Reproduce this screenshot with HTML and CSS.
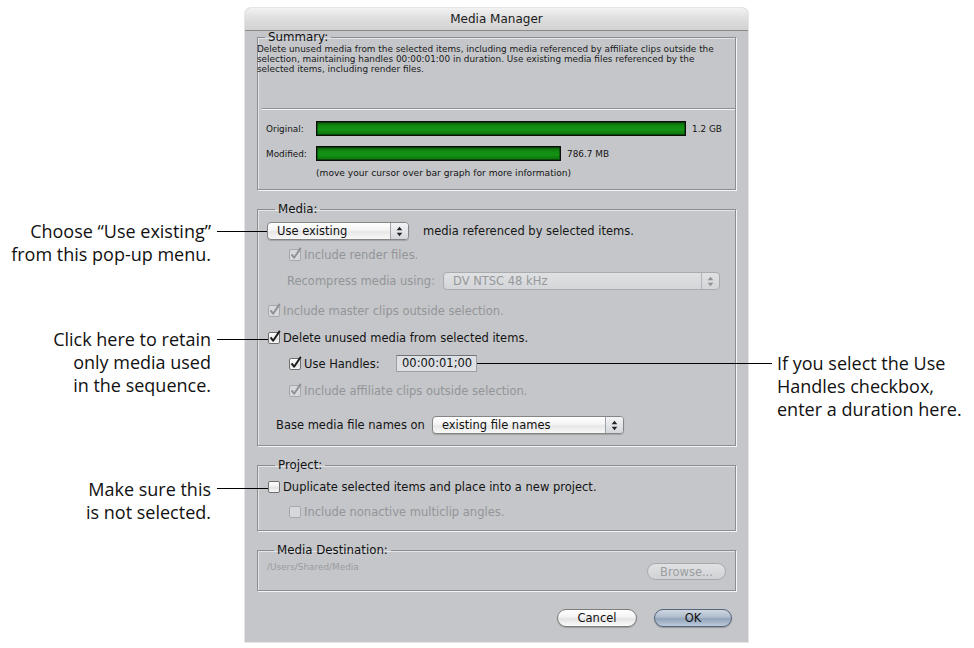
FILE: index.html
```html
<!DOCTYPE html>
<html lang="en">
<head>
<meta charset="utf-8">
<title>Media Manager</title>
<link rel="stylesheet" href="styles.css">
</head>
<body>
<svg class="defs" width="0" height="0" aria-hidden="true">
  <defs>
    <linearGradient id="cbg" x1="0" y1="0" x2="0" y2="1">
      <stop offset="0" stop-color="#ffffff"/>
      <stop offset="0.5" stop-color="#eeeeee"/>
      <stop offset="0.55" stop-color="#e2e2e2"/>
      <stop offset="1" stop-color="#fbfbfb"/>
    </linearGradient>
  </defs>
</svg>
<div class="figure">
  <div class="dialog">
    <div class="titlebar">Media Manager</div>
    <div class="dialog-body">

      <fieldset class="group group-summary">
        <legend>Summary:</legend>
        <p class="summary-text">Delete unused media from the selected items, including media referenced by affiliate clips outside the<br>selection, maintaining handles 00:00:01:00 in duration. Use existing media files referenced by the<br>selected items, including render files.</p>
        <div class="separator"></div>
        <div class="bar-row bar-row-first">
          <span class="bar-label">Original:</span>
          <span class="bar" style="width:370px"></span>
          <span class="bar-value">1.2 GB</span>
        </div>
        <div class="bar-row">
          <span class="bar-label">Modified:</span>
          <span class="bar" style="width:245px"></span>
          <span class="bar-value">786.7 MB</span>
        </div>
        <p class="bar-hint">(move your cursor over bar graph for more information)</p>
      </fieldset>

      <fieldset class="group group-media">
        <legend>Media:</legend>
        <div class="row row-popup">
          <div class="popup popup-use">
            <span class="popup-text">Use existing</span>
            <span class="popup-arrows"><svg width="7" height="11" viewBox="0 0 7 11"><path d="M3.5 0.8 L6.3 4.2 L0.7 4.2 Z M3.5 10.2 L6.3 6.8 L0.7 6.8 Z"/></svg></span>
          </div>
          <span class="after-popup">media referenced by selected items.</span>
        </div>
        <div class="row check-row indent is-disabled r-render">
          <svg class="cb" width="13" height="14" viewBox="0 0 13 14"><rect class="cb-box" x="0.5" y="2.5" width="11" height="11" rx="1.5"/><path class="cb-mark" d="M2.6 7.4 L5.1 10.8 L11.8 0.9"/></svg>
          <span>Include render files.</span>
        </div>
        <div class="row row-recompress is-disabled">
          <span class="recompress-label">Recompress media using:</span>
          <div class="popup popup-recompress is-disabled">
            <span class="popup-text">DV NTSC 48 kHz</span>
            <span class="popup-arrows"><svg width="7" height="11" viewBox="0 0 7 11"><path d="M3.5 0.8 L6.3 4.2 L0.7 4.2 Z M3.5 10.2 L6.3 6.8 L0.7 6.8 Z"/></svg></span>
          </div>
        </div>
        <div class="row check-row is-disabled r-master">
          <svg class="cb" width="13" height="14" viewBox="0 0 13 14"><rect class="cb-box" x="0.5" y="2.5" width="11" height="11" rx="1.5"/><path class="cb-mark" d="M2.6 7.4 L5.1 10.8 L11.8 0.9"/></svg>
          <span>Include master clips outside selection.</span>
        </div>
        <div class="row check-row r-delete">
          <svg class="cb" width="13" height="14" viewBox="0 0 13 14"><rect class="cb-box" x="0.5" y="2.5" width="11" height="11" rx="1.5"/><path class="cb-mark" d="M2.6 7.4 L5.1 10.8 L11.8 0.9"/></svg>
          <span>Delete unused media from selected items.</span>
        </div>
        <div class="row check-row indent r-handles">
          <svg class="cb" width="13" height="14" viewBox="0 0 13 14"><rect class="cb-box" x="0.5" y="2.5" width="11" height="11" rx="1.5"/><path class="cb-mark" d="M2.6 7.4 L5.1 10.8 L11.8 0.9"/></svg>
          <span class="handles-label">Use Handles:</span>
          <span class="field">00:00:01;00</span>
        </div>
        <div class="row check-row indent is-disabled r-affiliate">
          <svg class="cb" width="13" height="14" viewBox="0 0 13 14"><rect class="cb-box" x="0.5" y="2.5" width="11" height="11" rx="1.5"/><path class="cb-mark" d="M2.6 7.4 L5.1 10.8 L11.8 0.9"/></svg>
          <span>Include affiliate clips outside selection.</span>
        </div>
        <div class="row row-base">
          <span class="base-label">Base media file names on</span>
          <div class="popup popup-base">
            <span class="popup-text">existing file names</span>
            <span class="popup-arrows"><svg width="7" height="11" viewBox="0 0 7 11"><path d="M3.5 0.8 L6.3 4.2 L0.7 4.2 Z M3.5 10.2 L6.3 6.8 L0.7 6.8 Z"/></svg></span>
          </div>
        </div>
      </fieldset>

      <fieldset class="group group-project">
        <legend>Project:</legend>
        <div class="row check-row r-duplicate">
          <svg class="cb" width="13" height="14" viewBox="0 0 13 14"><rect class="cb-box" x="0.5" y="2.5" width="11" height="11" rx="1.5"/></svg>
          <span>Duplicate selected items and place into a new project.</span>
        </div>
        <div class="row check-row indent is-disabled r-nonactive">
          <svg class="cb" width="13" height="14" viewBox="0 0 13 14"><rect class="cb-box" x="0.5" y="2.5" width="11" height="11" rx="1.5"/></svg>
          <span>Include nonactive multiclip angles.</span>
        </div>
      </fieldset>

      <fieldset class="group group-dest">
        <legend>Media Destination:</legend>
        <div class="dest-row">
          <span class="dest-path">/Users/Shared/Media</span>
          <span class="btn btn-browse">Browse...</span>
        </div>
      </fieldset>

      <div class="button-row">
        <span class="btn btn-cancel">Cancel</span>
        <span class="btn btn-ok">OK</span>
      </div>
    </div>
  </div>

  <div class="callout callout-left c-choose">Choose “Use existing”<br>from this pop-up menu.</div>
  <div class="callout callout-left c-click">Click here to retain<br>only media used<br>in the sequence.</div>
  <div class="callout callout-left c-make">Make sure this<br>is not selected.</div>
  <div class="callout callout-right c-handles">If you select the Use<br>Handles checkbox,<br>enter a duration here.</div>

  <span class="leader l-choose"></span>
  <span class="leader l-click"></span>
  <span class="leader l-make"></span>
  <span class="leader l-handles"></span>
</div>
</body>
</html>
```

FILE: styles.css
```css
* { box-sizing: border-box; }
html, body { margin: 0; padding: 0; background: #ffffff; }
body { font-family: "DejaVu Sans", Verdana, sans-serif; color: #141414; }

.defs { position: absolute; width: 0; height: 0; }

.figure {
  position: relative;
  width: 974px;
  height: 648px;
  padding: 8px 0 0 245px;
  overflow: hidden;
}

/* ---------- dialog ---------- */
.dialog {
  width: 503px;
  height: 634px;
  background: #c4c6c9;
  border-radius: 6px 6px 0 0;
  box-shadow: 0 0 0 1px rgba(0, 0, 0, 0.10);
}

.titlebar {
  height: 23px;
  border-bottom: 1px solid #8a8a8a;
  border-radius: 6px 6px 0 0;
  background: linear-gradient(#f2f2f2, #dedede 50%, #d2d2d2);
  text-align: center;
  font-size: 12px;
  line-height: 22px;
  color: #1a1a1a;
}

.dialog-body { padding: 0 12px; }

/* ---------- group boxes ---------- */
.group {
  margin: 0;
  padding: 0;
  min-width: 0;
  border: 1px solid #8b8d90;
  box-shadow: 1px 1px 0 rgba(255, 255, 255, 0.8), inset 1px 1px 0 rgba(255, 255, 255, 0.55);
}
.group legend {
  margin-left: 7px;
  padding: 0 3px;
  height: 12px;
  font-size: 11.8px;
  line-height: 12px;
  color: #111;
}
.group-media { margin-top: 13px; padding: 0 0 11px 10px; }
.group-project { margin-top: 13px; padding: 0 0 11px 10px; }
.group-dest { margin-top: 13px; padding: 0 9px 10px 9px; }

/* ---------- summary ---------- */
.summary-text {
  margin: 1px 0 0 -1px;
  font-size: 8.9px;
  line-height: 10px;
  white-space: nowrap;
  color: #1a1a1a;
}
.separator {
  margin: 34px 0 0 4px;
  height: 2px;
  border-top: 1px solid #8f9194;
  border-bottom: 1px solid rgba(255, 255, 255, 0.8);
}
.bar-row {
  display: flex;
  align-items: center;
  height: 15px;
  margin-top: 10px;
  padding-left: 8px;
  font-size: 8.9px;
}
.bar-row-first { margin-top: 11px; }
.bar-label { width: 50px; }
.bar {
  height: 15px;
  border: 1px solid #0b0d0b;
  background: linear-gradient(#0a5a0a, #128a12 30%, #149414 60%, #0d6e0d);
  box-shadow: inset 0 0 0 1px rgba(0, 0, 0, 0.35);
}
.bar-value { margin-left: 6px; }
.bar-hint {
  margin: 6px 0 0 58px;
  font-size: 9.1px;
  line-height: 12px;
  padding-bottom: 10px;
  white-space: nowrap;
}

/* ---------- media rows ---------- */
.row {
  display: flex;
  align-items: center;
  font-size: 11.5px;
  white-space: nowrap;
}
.check-row { height: 14px; }
.indent { padding-left: 21px; }
.is-disabled { color: #939598; }

.row-popup { margin-top: 7px; height: 18px; }
.r-render { margin-top: 8px; }
.row-recompress { margin-top: 10px; height: 18px; padding-left: 19px; }
.recompress-label { width: 156px; }
.r-master { margin-top: 14px; }
.r-delete { margin-top: 13px; }
.r-handles { margin-top: 10px; height: 17px; }
.r-affiliate { margin-top: 12px; }
.row-base { margin-top: 18px; height: 18px; padding-left: 8px; }
.r-duplicate { margin-top: 9px; }
.r-nonactive { margin-top: 11px; }

.cb { flex: none; margin-right: 2px; margin-top: -2px; overflow: visible; }
.cb-box { fill: url(#cbg); stroke: #6e6e6e; stroke-width: 1; }
.cb-mark { fill: none; stroke: #1a1a1a; stroke-width: 1.9; stroke-linejoin: round; }
.is-disabled .cb-box { fill: #d6d8db; stroke: #a6a8ab; }
.is-disabled .cb-mark { stroke: #8e9093; }

.after-popup { margin-left: 14px; color: #161616; }

/* popup buttons */
.popup {
  display: flex;
  height: 18px;
  border: 1px solid #858585;
  border-radius: 4px;
  background: linear-gradient(#ffffff, #f4f4f4 45%, #e7e7e7 55%, #f8f8f8);
  box-shadow: 0 1px 1px rgba(0, 0, 0, 0.18);
  overflow: hidden;
  color: #111;
}
.popup-text { flex: 1; padding-left: 9px; line-height: 16px; }
.popup-arrows {
  flex: none;
  width: 18px;
  border-left: 1px solid #a0a2a6;
  display: flex;
  align-items: center;
  justify-content: center;
  background: linear-gradient(#f3f4f6, #d3d7dc);
}
.popup-arrows svg { fill: #222; }
.popup-use { width: 142px; margin-left: -1px; }
.popup-recompress { width: 277px; }
.popup-base { width: 192px; margin-left: 7px; }
.popup.is-disabled {
  border-color: #a9abae;
  background: linear-gradient(#dfe1e3, #d3d5d8);
  box-shadow: none;
  color: #96989b;
}
.popup.is-disabled .popup-arrows { background: transparent; border-left-color: #b3b5b8; }
.popup.is-disabled .popup-arrows svg { fill: #8f9194; }

.handles-label { width: 92px; }
.field {
  width: 81px;
  height: 17px;
  border: 1px solid #9c9ea1;
  border-top-color: #707275;
  background: #dde0e4;
  padding-left: 5px;
  line-height: 15px;
  color: #111;
}

/* ---------- destination ---------- */
.dest-row {
  display: flex;
  justify-content: space-between;
  align-items: flex-start;
  margin-top: 6px;
  height: 18px;
}
.dest-path { font-size: 8.9px; line-height: 10px; color: #9a9c9f; }

/* ---------- buttons ---------- */
.btn {
  display: inline-flex;
  align-items: center;
  justify-content: center;
  height: 18px;
  border-radius: 9px;
  font-size: 11.5px;
}
.btn-browse {
  width: 79px;
  height: 17px;
  margin-top: 1px;
  border: 1px solid #a7a9ac;
  background: linear-gradient(#dfe1e3, #d0d2d5);
  color: #9b9da0;
}
.button-row {
  display: flex;
  justify-content: flex-end;
  gap: 17px;
  margin-top: 18px;
  padding-right: 4px;
}
.btn-cancel {
  width: 80px;
  border: 1px solid #7c7c7c;
  background: linear-gradient(#ffffff, #f3f3f3 45%, #e3e3e3 55%, #fbfbfb);
  box-shadow: 0 1px 1px rgba(0, 0, 0, 0.2);
  color: #111;
}
.btn-ok {
  width: 78px;
  border: 1px solid #56667a;
  background: linear-gradient(#cfd8e3, #aebbcb 45%, #92a4ba 55%, #bccadb);
  box-shadow: 0 1px 1px rgba(0, 0, 0, 0.25);
  color: #111;
}

/* ---------- callouts ---------- */
.callout {
  position: absolute;
  font-family: "Open Sans", "Liberation Sans", sans-serif;
  font-size: 18px;
  line-height: 23px;
  color: #111;
  white-space: nowrap;
}
.callout-left { text-align: right; right: 763px; }
.c-choose { top: 220px; }
.c-click { top: 328px; }
.c-make { top: 478px; }
.c-handles { left: 777px; top: 352px; }

.leader { position: absolute; height: 1px; background: #000; }
.l-choose { left: 217px; width: 50px; top: 231px; }
.l-click { left: 217px; width: 51px; top: 339px; }
.l-make { left: 217px; width: 51px; top: 488px; }
.l-handles { left: 477px; width: 295px; top: 363px; }
```
